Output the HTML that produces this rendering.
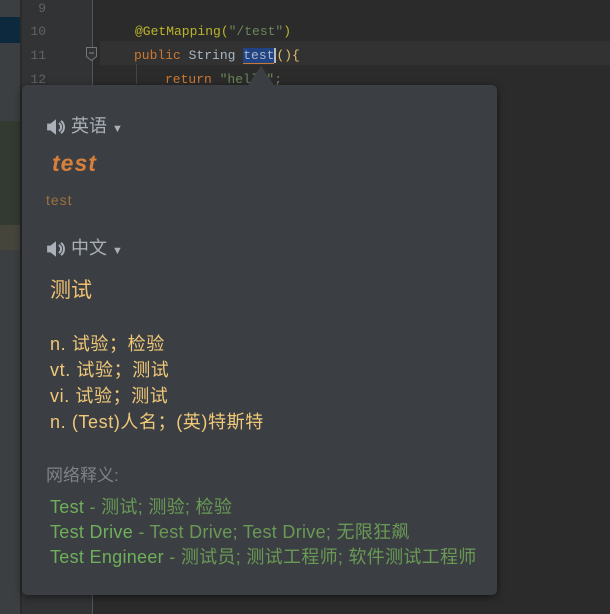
<!DOCTYPE html>
<html><head><meta charset="utf-8"><style>
body{margin:0;width:610px;height:614px;background:#2b2b2b;position:relative;overflow:hidden;font-family:"Liberation Sans","Noto Sans CJK SC",sans-serif}
.a{position:absolute;white-space:nowrap}
.mono{font-family:"Liberation Mono","Noto Sans CJK SC",monospace;font-size:13px}
.ln{color:#606366;left:20px;width:26px;text-align:right}
.spk{display:inline-block;vertical-align:middle}
</style></head><body>
<div class="a" style="left:0;top:0;width:20px;height:614px;background:#3c3f41"></div>
<div class="a" style="left:0;top:17px;width:20px;height:26px;background:#0d293e"></div>
<div class="a" style="left:0;top:121px;width:20px;height:104px;background:#333a31"></div>
<div class="a" style="left:0;top:225px;width:20px;height:25px;background:#46453c"></div>
<div class="a" style="left:20px;top:0;width:2px;height:614px;background:#2b2b2b"></div>
<div class="a" style="left:22px;top:0;width:70px;height:614px;background:#313335"></div>
<div class="a" style="left:92px;top:0;width:1px;height:614px;background:#555"></div>
<div class="a" style="left:100px;top:41px;width:510px;height:24px;background:#323232"></div>
<div class="a mono ln" style="top:1px">9</div>
<div class="a mono ln" style="top:24px">10</div>
<div class="a mono ln" style="top:48px">11</div>
<div class="a mono ln" style="top:72px">12</div>
<svg class="a" style="left:85px;top:46px" width="14" height="16"><path d="M1.5 1.5h10v9l-5 4-5-4z" fill="#313335" stroke="#777"/><path d="M4 7h5" stroke="#888"/></svg>
<div class="a mono" style="left:135px;top:24px;color:#bbb529">@GetMapping(<span style="color:#6a8759">"/test"</span>)</div>
<div class="a mono" style="left:134px;top:48px;color:#a9b7c6"><span style="color:#cc7832">public</span> String <span style="background:#214283;border-bottom:1px solid #cc7832">test</span><span style="border-left:2px solid #bbb"></span><span style="color:#e8bf6a">(){</span></div>
<div class="a mono" style="left:165px;top:72px;color:#cc7832">return <span style="color:#6a8759">"hello";</span></div>
<div class="a" style="left:136px;top:64px;width:1px;height:20px;background:#444"></div>
<div class="a" style="left:22px;top:85px;width:475px;height:510px;background:#3b3f43;border-radius:5px;box-shadow:0 2px 8px rgba(0,0,0,.5)"></div>
<div class="a" style="left:248px;top:66px;width:0;height:0;border-left:13px solid transparent;border-right:13px solid transparent;border-bottom:19px solid #3b3f43"></div>
<div class="a" style="left:46px;top:112px;color:#a9b0b8;font-size:18px"><svg class="spk" width="20" height="18" viewBox="0 0 18 16"><path d="M1 5h3l5-4v14l-5-4H1z" fill="#a9b0b8"/><path d="M11.5 4.5a4 4 0 0 1 0 7M13.5 2.5a7 7 0 0 1 0 11" stroke="#a9b0b8" stroke-width="1.8" fill="none"/></svg> 英语 <span style="font-size:11px">▼</span></div>
<div class="a" style="left:52px;top:150px;color:#d8803a;font-size:23px;font-weight:bold;font-style:italic;letter-spacing:1px">test</div>
<div class="a" style="left:46px;top:192px;color:#a0703f;font-size:14px;letter-spacing:1px">test</div>
<div class="a" style="left:46px;top:234px;color:#a9b0b8;font-size:18px"><svg class="spk" width="20" height="18" viewBox="0 0 18 16"><path d="M1 5h3l5-4v14l-5-4H1z" fill="#a9b0b8"/><path d="M11.5 4.5a4 4 0 0 1 0 7M13.5 2.5a7 7 0 0 1 0 11" stroke="#a9b0b8" stroke-width="1.8" fill="none"/></svg> 中文 <span style="font-size:11px">▼</span></div>
<div class="a" style="left:50px;top:274px;color:#f0c070;font-size:21px">测试</div>
<div class="a" style="left:50px;top:331px;color:#f0c878;font-size:18px;line-height:26px;letter-spacing:0.6px">n. 试验；检验<br>vt. 试验；测试<br>vi. 试验；测试<br>n. (Test)人名；(英)特斯特</div>
<div class="a" style="left:46px;top:461px;color:#7f8388;font-size:17px">网络释义:</div>
<div class="a" style="left:50px;top:495px;color:#6a9955;font-size:18px;line-height:25px;letter-spacing:0.3px"><span style="color:#6faf5a">Test</span> - 测试; 测验; 检验<br><span style="color:#6faf5a">Test Drive</span> - Test Drive; Test Drive; 无限狂飙<br><span style="color:#6faf5a">Test Engineer</span> - 测试员; 测试工程师; 软件测试工程师</div>
</body></html>
